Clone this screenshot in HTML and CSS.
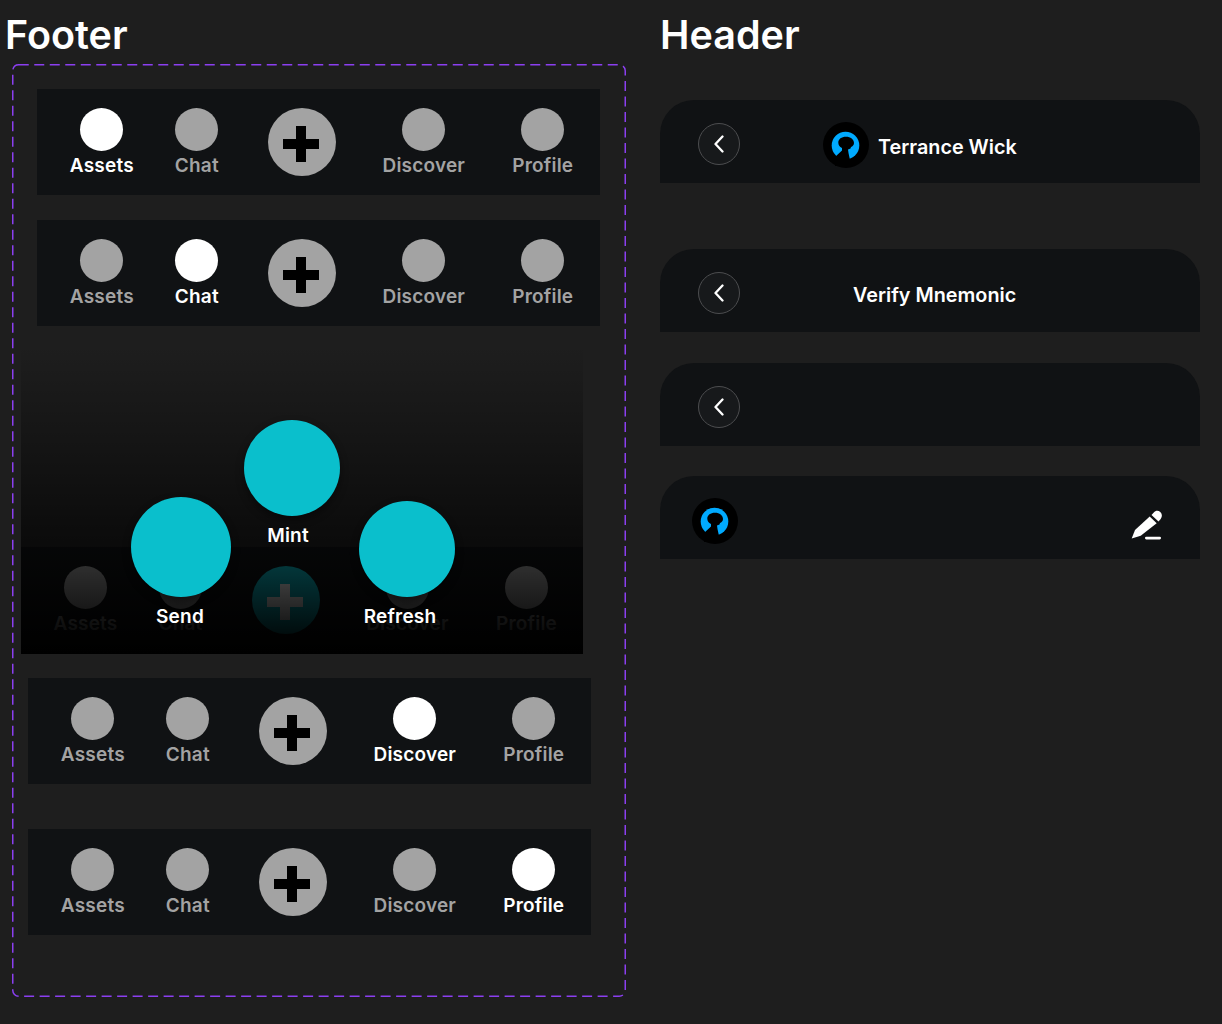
FILE: index.html
```html
<!DOCTYPE html>
<html lang="en">
<head>
<meta charset="utf-8">
<title>Footer and Header components</title>
<link rel="stylesheet" href="styles.css">
</head>
<body>
<main class="board">
  <section class="col col-footer">
    <h1 class="title">Footer</h1>
    <div class="set">
      <svg class="set-outline" width="614" height="933" viewBox="0 0 614 933" aria-hidden="true"><rect x="0.75" y="0.75" width="612.5" height="931.5" rx="6" ry="6"/></svg>

      <nav class="bar bar-a">
        <div class="item active"><span class="dot"></span><span class="lbl">Assets</span></div>
        <div class="item"><span class="dot"></span><span class="lbl">Chat</span></div>
        <div class="item"><span class="fab"><span class="plus"></span></span></div>
        <div class="item"><span class="dot"></span><span class="lbl">Discover</span></div>
        <div class="item"><span class="dot"></span><span class="lbl">Profile</span></div>
      </nav>

      <nav class="bar bar-a gap-s">
        <div class="item"><span class="dot"></span><span class="lbl">Assets</span></div>
        <div class="item active"><span class="dot"></span><span class="lbl">Chat</span></div>
        <div class="item"><span class="fab"><span class="plus"></span></span></div>
        <div class="item"><span class="dot"></span><span class="lbl">Discover</span></div>
        <div class="item"><span class="dot"></span><span class="lbl">Profile</span></div>
      </nav>

      <div class="sheet">
        <nav class="bar bar-sheet">
          <div class="item"><span class="dot"></span><span class="lbl">Assets</span></div>
          <div class="item"><span class="dot"></span><span class="lbl">Chat</span></div>
          <div class="item"><span class="fab fab-on"><span class="plus plus-on"></span></span></div>
          <div class="item"><span class="dot"></span><span class="lbl">Discover</span></div>
          <div class="item"><span class="dot"></span><span class="lbl">Profile</span></div>
        </nav>
        <div class="scrim"></div>
        <span class="act act-mint"></span>
        <span class="act act-send"></span>
        <span class="act act-refresh"></span>
        <span class="act-lbl lbl-mint">Mint</span>
        <span class="act-lbl lbl-send">Send</span>
        <span class="act-lbl lbl-refresh">Refresh</span>
      </div>

      <nav class="bar bar-b gap-m">
        <div class="item"><span class="dot"></span><span class="lbl">Assets</span></div>
        <div class="item"><span class="dot"></span><span class="lbl">Chat</span></div>
        <div class="item"><span class="fab"><span class="plus"></span></span></div>
        <div class="item active"><span class="dot"></span><span class="lbl">Discover</span></div>
        <div class="item"><span class="dot"></span><span class="lbl">Profile</span></div>
      </nav>

      <nav class="bar bar-b gap-l">
        <div class="item"><span class="dot"></span><span class="lbl">Assets</span></div>
        <div class="item"><span class="dot"></span><span class="lbl">Chat</span></div>
        <div class="item"><span class="fab"><span class="plus"></span></span></div>
        <div class="item"><span class="dot"></span><span class="lbl">Discover</span></div>
        <div class="item active"><span class="dot"></span><span class="lbl">Profile</span></div>
      </nav>
    </div>
  </section>

  <section class="col col-header">
    <h1 class="title">Header</h1>
    <div class="heads">
      <header class="head head-user">
        <button class="back" aria-label="Back"><svg width="12" height="18" viewBox="0 0 12 18"><path d="M9.5 1.500 2.500 9l7 7.500"/></svg></button>
        <div class="who">
          <svg class="avatar" width="46" height="46" viewBox="0 0 46 46"><circle class="av-bg" cx="23" cy="23" r="23"/><circle class="av-ring" cx="22.500" cy="23.500" r="13.800"/><path class="av-bg" d="M15.300 20.500C15.300 17 18.500 14.700 23 14.700 27.500 14.700 31 17.300 31 21 31 23 29.500 24.500 28 25L27.500 26.500 25 27.500 25.500 31 27 38V44H12V35L19 28.500V26C16.500 25 15.300 23 15.300 20.500Z"/></svg>
          <span class="name">Terrance Wick</span>
        </div>
      </header>

      <header class="head head-title gap-66">
        <button class="back" aria-label="Back"><svg width="12" height="18" viewBox="0 0 12 18"><path d="M9.5 1.500 2.500 9l7 7.500"/></svg></button>
        <span class="name name-verify">Verify Mnemonic</span>
      </header>

      <header class="head gap-31">
        <button class="back" aria-label="Back"><svg width="12" height="18" viewBox="0 0 12 18"><path d="M9.5 1.500 2.500 9l7 7.500"/></svg></button>
      </header>

      <header class="head head-profile gap-30">
        <svg class="avatar avatar-solo" width="46" height="46" viewBox="0 0 46 46"><circle class="av-bg" cx="23" cy="23" r="23"/><circle class="av-ring" cx="22.500" cy="23.500" r="13.800"/><path class="av-bg" d="M15.300 20.500C15.300 17 18.500 14.700 23 14.700 27.500 14.700 31 17.300 31 21 31 23 29.500 24.500 28 25L27.500 26.500 25 27.500 25.500 31 27 38V44H12V35L19 28.500V26C16.500 25 15.300 23 15.300 20.500Z"/></svg>
        <svg class="pen" width="34" height="34" viewBox="0 0 34 34"><path d="M2.700 31.500 6 23 20.700 9.500l7 6.800L11.700 28.800Z"/><path d="M22.500 8l7 6.600 2.200-2.600c1.800-2.300 1.500-5-.4-6.900-1.900-1.800-4.800-1.700-6.500.3Z"/><rect x="16" y="29.800" width="16" height="2.600" rx="1.300"/></svg>
      </header>
    </div>
  </section>
</main>
</body>
</html>
```

FILE: styles.css
```css
* { box-sizing: border-box; }

html, body { margin: 0; padding: 0; }

body {
  background: #1e1e1e;
  color: #fff;
  font-family: Inter, "Liberation Sans", sans-serif;
}

.board {
  display: flex;
  width: 1222px;
  height: 1024px;
  overflow: hidden;
}

.col { display: flex; flex-direction: column; }
.col-footer { width: 660px; padding-left: 5px; }
.col-header { width: 540px; }

.title {
  height: 64px;
  margin: 0;
  padding-top: 10px;
  font-size: 39.500px;
  line-height: 50px;
  font-weight: 600;
  letter-spacing: 0;
}

/* component set with dashed outline */
.set {
  position: relative;
  display: flex;
  flex-direction: column;
  align-items: flex-start;
  width: 614px;
  height: 933px;
  margin-left: 7px;
  padding-top: 25px;
}

.set-outline {
  position: absolute;
  top: 0;
  left: 0;
  fill: none;
  stroke: #8b3ff0;
  stroke-width: 1.500;
  stroke-dasharray: 10 5.500;
}

/* footer bar */
.bar {
  display: grid;
  grid-template-columns: 95px 95px 115px 129px 109px;
  align-items: start;
  width: 563px;
  height: 106px;
  padding: 19px 0 0 17.300px;
  background: #101214;
}

.bar-a { margin-left: 25px; }
.bar-b { margin-left: 16px; }
.bar-sheet { width: 562px; padding-left: 17px; }

.gap-s { margin-top: 25px; }
.gap-m { margin-top: 24px; }
.gap-l { margin-top: 45px; }

.item {
  display: flex;
  flex-direction: column;
  align-items: center;
  color: #a3a3a3;
}

.item.active { color: #fff; }

.dot {
  width: 43px;
  height: 43px;
  border-radius: 50%;
  background: currentColor;
}

.lbl {
  margin-top: 3px;
  font-size: 19px;
  line-height: 24px;
  font-weight: 600;
  letter-spacing: 0.2px;
  white-space: nowrap;
}

.fab {
  display: flex;
  align-items: center;
  justify-content: center;
  width: 68px;
  height: 68px;
  border-radius: 50%;
  background: #a3a3a3;
}

.fab-on { background: #0abfcc; }

.plus {
  width: 36px;
  height: 36px;
  margin: 3px 2px 0 0;
  background:
    linear-gradient(#000, #000) center / 10px 36px no-repeat,
    linear-gradient(#000, #000) center / 36px 10px no-repeat;
}

.plus-on {
  background:
    linear-gradient(#fff, #fff) center / 10px 36px no-repeat,
    linear-gradient(#fff, #fff) center / 36px 10px no-repeat;
}

/* expanded action sheet */
.sheet {
  position: relative;
  display: flex;
  flex-direction: column;
  justify-content: flex-end;
  width: 562px;
  height: 309px;
  margin: 19px 0 0 9px;
  padding-bottom: 1px;
}

.scrim {
  position: absolute;
  inset: 0;
  background: linear-gradient(rgba(0, 0, 0, 0), #000);
}

.act {
  position: absolute;
  width: 96px;
  height: 96px;
  border-radius: 50%;
  background: #0abfcc;
  box-shadow: 0 4px 8px rgba(0, 0, 0, 0.45);
}

.act-mint { left: 223px; top: 75px; }
.act-send { left: 110px; top: 152px; width: 100px; height: 100px; }
.act-refresh { left: 338px; top: 156px; }

.act-lbl {
  position: absolute;
  font-size: 19px;
  line-height: 24px;
  font-weight: 600;
  letter-spacing: 0.2px;
  transform: translateX(-50%);
}

.lbl-mint { left: 267px; top: 179px; }
.lbl-send { left: 159px; top: 260px; }
.lbl-refresh { left: 379px; top: 260px; }

/* headers */
.heads {
  display: flex;
  flex-direction: column;
  padding-top: 36px;
}

.head {
  display: flex;
  align-items: center;
  width: 540px;
  height: 83px;
  padding: 4px 0 0 38px;
  border-radius: 34px 34px 0 0;
  background: #101214;
}

.gap-66 { margin-top: 66px; }
.gap-31 { margin-top: 31px; }
.gap-30 { margin-top: 30px; }

.back {
  display: flex;
  flex: none;
  align-items: center;
  justify-content: center;
  width: 42px;
  height: 42px;
  padding: 0;
  border: 1px solid #4c4d4f;
  border-radius: 50%;
  background: #17191b;
}

.back svg {
  fill: none;
  stroke: #fff;
  stroke-width: 2.300;
  stroke-linecap: round;
  stroke-linejoin: round;
}

.who {
  display: flex;
  align-items: center;
  gap: 9px;
  margin: 2px 0 0 83px;
}

.avatar { flex: none; }
.avatar-solo { margin-top: 2px; }
.av-bg { fill: #000; }
.av-ring { fill: #00aaff; }

.name {
  padding-top: 5px;
  font-size: 19.800px;
  line-height: 28px;
  font-weight: 600;
  white-space: nowrap;
}

.name-verify { margin-left: 113px; padding-top: 4px; }

.head-profile {
  justify-content: space-between;
  padding: 4px 37px 0 32px;
}

.pen { margin-top: 8px; fill: #fff; }
```
